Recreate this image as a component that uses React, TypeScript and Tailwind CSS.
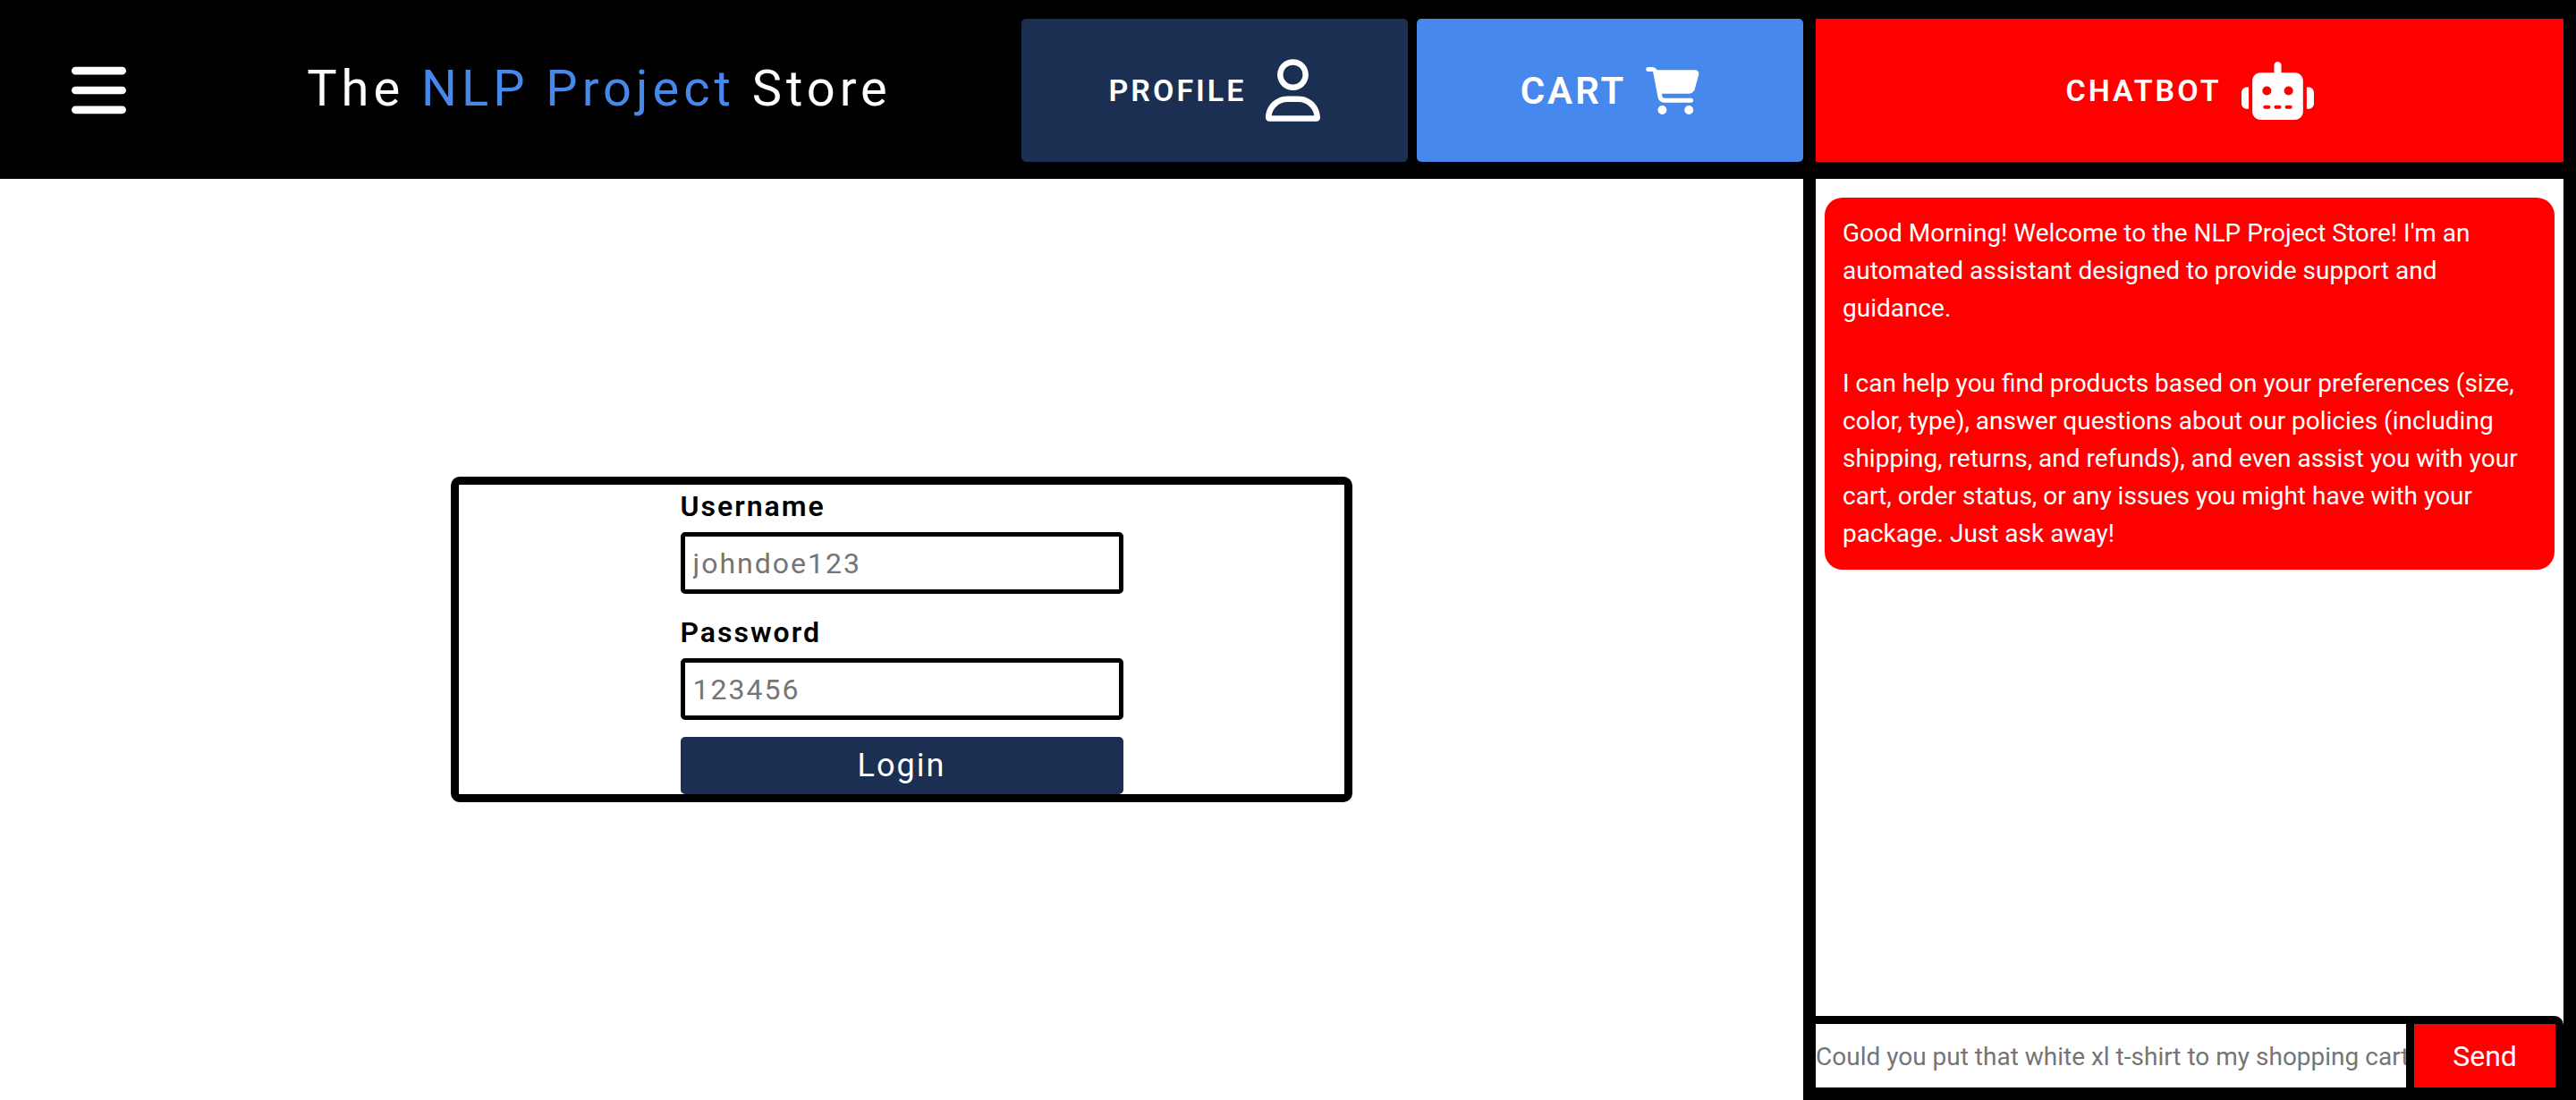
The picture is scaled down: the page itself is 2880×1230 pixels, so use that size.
import { FaBars, FaCartShopping, FaRegUser, FaRobot } from "react-icons/fa6";

const greeting = [
  "Good Morning! Welcome to the NLP Project Store! I'm an automated assistant designed to provide support and guidance.",
  "I can help you find products based on your preferences (size, color, type), answer questions about our policies (including shipping, returns, and refunds), and even assist you with your cart, order status, or any issues you might have with your package. Just ask away!",
];

function Header() {
  return (
    <header className="flex h-[200px] bg-black pt-[21px] pb-[19px]">
      <button type="button" aria-label="Menu" className="flex w-[220px] items-center justify-center">
        <FaBars className="h-[70px] w-[61px]" />
      </button>
      <h1 className="flex-1 pt-[46px] text-center text-[56px] leading-[64px] tracking-[5px] whitespace-nowrap">
        The <span className="text-[#4788ec]">NLP Project</span> Store
      </h1>
      <nav className="ml-[22px] flex gap-[10px]">
        <button
          type="button"
          className="flex w-[15vw] items-center justify-center gap-[22px] rounded-[5px] bg-[#1b2f52] text-[34px] font-semibold tracking-[3px]"
        >
          PROFILE
          <FaRegUser className="h-[70px] w-[61px]" />
        </button>
        <button
          type="button"
          className="flex w-[15vw] items-center justify-center gap-[22px] rounded-[5px] bg-[#4788ec] text-[42px] font-semibold tracking-[3px]"
        >
          CART
          <FaCartShopping className="h-[53px] w-[60px]" />
        </button>
      </nav>
    </header>
  );
}

function Field({ id, label, placeholder }: { id: string; label: string; placeholder: string }) {
  return (
    <div className="flex flex-col gap-[5px]">
      <label htmlFor={id} className="text-[32px] leading-[48px] font-semibold tracking-[2px]">
        {label}
      </label>
      <input
        id={id}
        type="text"
        placeholder={placeholder}
        className="h-[69px] w-full rounded-[5px] border-[5px] border-black px-[9px] text-[32px] tracking-[2px] outline-none placeholder:text-[#757575]"
      />
    </div>
  );
}

function LoginForm() {
  return (
    <form className="flex w-1/2 flex-col items-center rounded-[10px] border-[9px] border-black text-black">
      <div className="flex w-1/2 flex-col gap-[19px]">
        <Field id="username" label="Username" placeholder="johndoe123" />
        <Field id="password" label="Password" placeholder="123456" />
        <button type="button" className="h-[64px] rounded-[5px] bg-[#1b2f52] text-[36px] tracking-[2px] text-white">
          Login
        </button>
      </div>
    </form>
  );
}

function Chatbot() {
  return (
    <aside className="flex min-h-screen w-[30%] flex-col border-x-[14px] border-b-[14px] border-black bg-white">
      <div className="h-[200px] bg-black pt-[21px] pb-[19px]">
        <button
          type="button"
          className="flex h-full w-full items-center justify-center gap-[22px] bg-[#ff0000] text-[34px] font-semibold tracking-[3px]"
        >
          CHATBOT
          <FaRobot className="h-[65px] w-[81px]" />
        </button>
      </div>
      <div className="flex-1 px-[10px] py-[21px]">
        <div className="flex flex-col gap-[42px] rounded-[20px] bg-[#ff0000] px-[20px] py-[19px] text-[28px] leading-[42px]">
          {greeting.map((paragraph) => (
            <p key={paragraph}>{paragraph}</p>
          ))}
        </div>
      </div>
      <form className="flex h-[80px] rounded-tr-[10px] border-t-[9px] border-r-[9px] border-black bg-black">
        <input
          type="text"
          aria-label="Message"
          placeholder="Could you put that white xl t-shirt to my shopping cart?"
          className="min-w-0 flex-1 bg-white pt-[2px] text-[28px] text-black outline-none placeholder:text-[#757575]"
        />
        <button type="button" className="ml-[9px] w-[158px] bg-[#ff0000] text-[32px]">
          Send
        </button>
      </form>
    </aside>
  );
}

export default function App() {
  return (
    <div className="flex min-h-screen bg-white font-['Roboto',sans-serif] text-white">
      <div className="flex w-[70%] flex-col">
        <Header />
        <main className="flex flex-1 items-center justify-center">
          <LoginForm />
        </main>
      </div>
      <Chatbot />
    </div>
  );
}
